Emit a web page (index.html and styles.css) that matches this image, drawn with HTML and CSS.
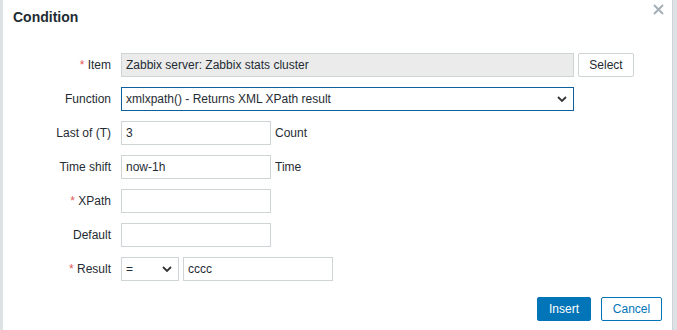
FILE: index.html
```html
<!DOCTYPE html>
<html lang="en">
<head>
  <meta charset="UTF-8">
  <title>Condition</title>
  <link rel="stylesheet" href="styles.css">
</head>
<body>
  <div class="dialog">
    <div class="dialog-head">
      <h4>Condition</h4>
      <span class="close">
        <svg width="11" height="11" viewBox="0 0 11 11"><path d="M1 1L10 10M10 1L1 10" stroke="#a5b0b6" stroke-width="2"/></svg>
      </span>
    </div>

    <div class="form">
      <div class="row">
        <label class="req">Item</label>
        <div class="field">
          <div class="input wide readonly">Zabbix server: Zabbix stats cluster</div>
          <button class="btn-alt small">Select</button>
        </div>
      </div>
      <div class="row">
        <label>Function</label>
        <div class="field">
          <div class="select wide focused">
            <span>xmlxpath() - Returns XML XPath result</span>
            <svg width="10" height="6" viewBox="0 0 10 6"><path d="M1 1L5 5L9 1" fill="none" stroke="#333" stroke-width="1.8"/></svg>
          </div>
        </div>
      </div>
      <div class="row">
        <label>Last of (T)</label>
        <div class="field">
          <div class="input">3</div>
          <span class="note">Count</span>
        </div>
      </div>
      <div class="row">
        <label>Time shift</label>
        <div class="field">
          <div class="input">now-1h</div>
          <span class="note">Time</span>
        </div>
      </div>
      <div class="row">
        <label class="req">XPath</label>
        <div class="field">
          <div class="input"></div>
        </div>
      </div>
      <div class="row">
        <label>Default</label>
        <div class="field">
          <div class="input"></div>
        </div>
      </div>
      <div class="row">
        <label class="req">Result</label>
        <div class="field">
          <div class="select short">
            <span>=</span>
            <svg width="10" height="6" viewBox="0 0 10 6"><path d="M1 1L5 5L9 1" fill="none" stroke="#333" stroke-width="1.8"/></svg>
          </div>
          <div class="input">cccc</div>
        </div>
      </div>
    </div>

    <div class="dialog-foot">
      <button class="btn">Insert</button>
      <button class="btn-alt">Cancel</button>
    </div>
  </div>
</body>
</html>
```

FILE: styles.css
```css
body {
  margin: 0;
  background: #dde2e5;
  font-family: "Liberation Sans", Arial, sans-serif;
  font-size: 12px;
  color: #1f2c33;
  height: 330px;
  overflow: hidden;
}
.dialog {
  position: relative;
  margin-left: 3px;
  width: 670px;
  height: 330px;
  background: #fff;
  border-right: 1px solid #cdd3d6;
  box-sizing: border-box;
}
.dialog-head {
  height: 35px;
  padding: 0 10px;
}
.dialog-head h4 {
  margin: 0;
  font-size: 14px;
  font-weight: bold;
  line-height: 35px;
  color: #1f2c33;
}
.close {
  position: absolute;
  top: 4px;
  right: 8px;
  width: 11px;
  height: 11px;
}
.close svg {
  display: block;
}
.form {
  margin-top: 18px;
  display: flex;
  flex-direction: column;
  gap: 10px;
}
.row {
  display: flex;
  align-items: center;
  height: 24px;
}
.row label {
  width: 118px;
  text-align: right;
  padding-right: 10px;
  box-sizing: border-box;
}
.row label.req::before {
  content: "* ";
  color: #e45959;
}
.field {
  display: flex;
  align-items: center;
  gap: 4px;
}
.input, .select {
  height: 24px;
  box-sizing: border-box;
  border: 1px solid #cfd4d7;
  padding: 0 4px;
  line-height: 22px;
  width: 150px;
  white-space: nowrap;
  overflow: hidden;
}
.input.wide, .select.wide {
  width: 453px;
}
.readonly {
  background: #ebebeb;
}
.select {
  display: flex;
  justify-content: space-between;
  align-items: center;
  padding-right: 6px;
}
.select.focused {
  border-color: #0e5f9c;
}
.select.short {
  width: 58px;
}
button {
  font-family: inherit;
  font-size: 12px;
  height: 24px;
  box-sizing: border-box;
  border-radius: 2px;
  padding: 0 10px;
}
.btn {
  background: #0275b8;
  border: 1px solid #0275b8;
  color: #fff;
  width: 54px;
}
.btn-alt {
  background: #fff;
  border: 1px solid #0275b8;
  color: #0275b8;
  width: 61px;
}
.btn-alt.small {
  width: 56px;
  border-color: #cfd4d7;
  color: #1f2c33;
}
.dialog-foot {
  display: flex;
  justify-content: flex-end;
  gap: 10px;
  margin-top: 16px;
  padding-right: 10px;
}
```
